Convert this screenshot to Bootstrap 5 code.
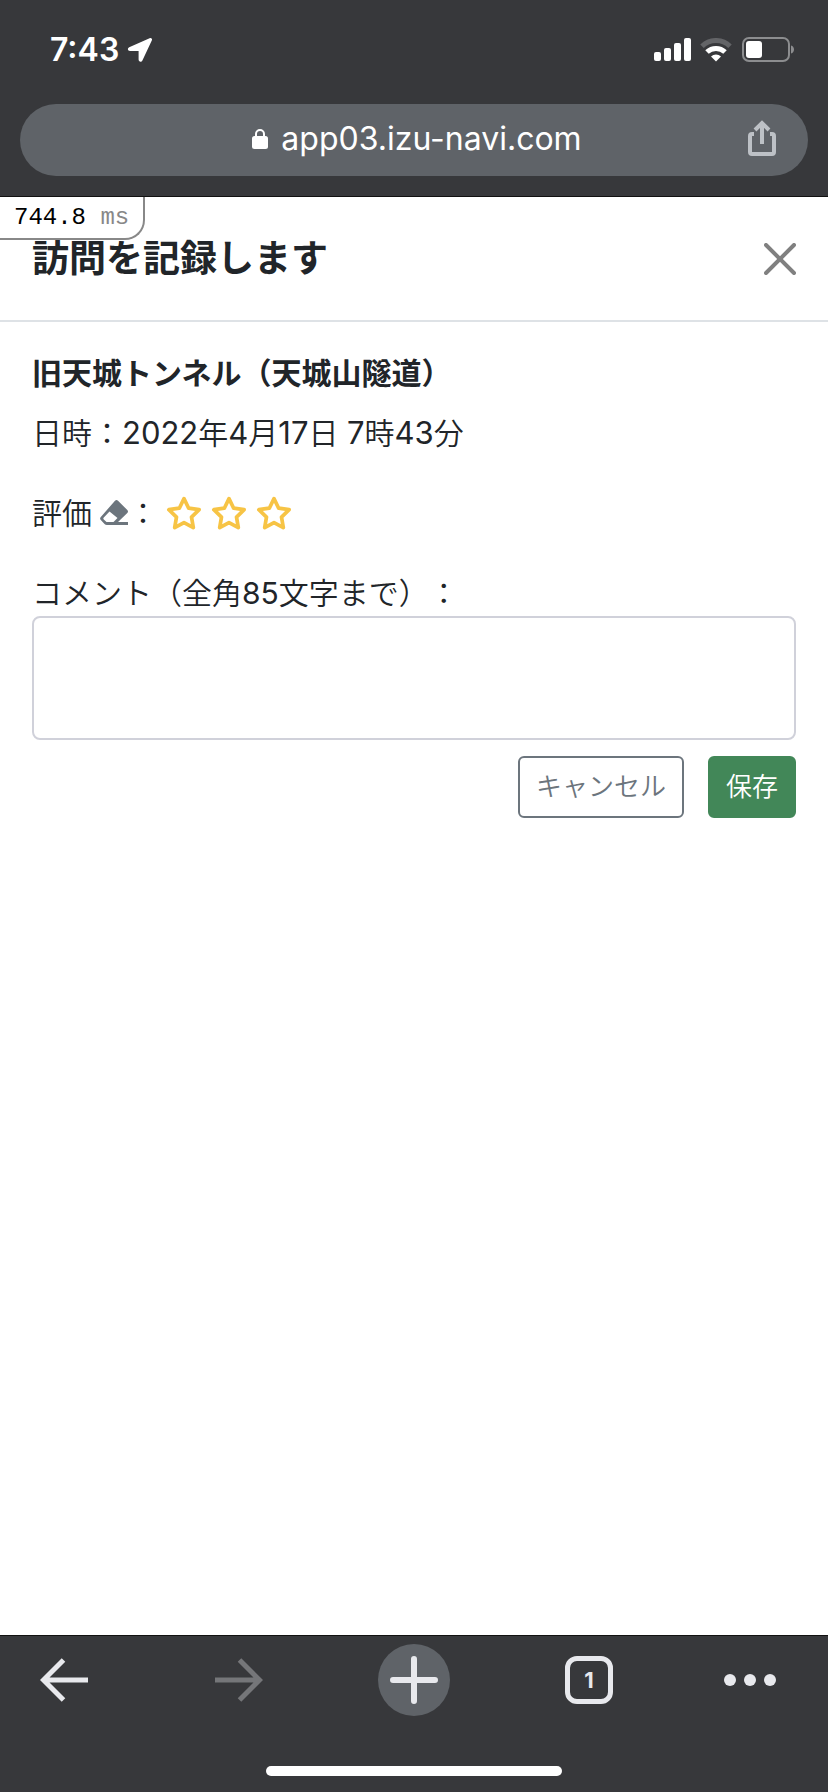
<!DOCTYPE html>
<html lang="ja">
<head>
<meta charset="utf-8">
<meta name="viewport" content="width=device-width, initial-scale=1">
<title>訪問を記録します</title>
<link href="https://cdn.jsdelivr.net/npm/bootstrap@5.3.0/dist/css/bootstrap.min.css" rel="stylesheet">
<style>
  body { font-family: Inter, "Noto Sans CJK JP", sans-serif; font-size: 30px; line-height: 44px; color: #212529; text-spacing-trim: space-all; }
  svg { display: block; flex: none; }
  .chrome { background: #37383b; color: #fff; }
  .chrome-top { border-bottom: 1px solid #111; }
  .chrome-bottom { border-top: 1px solid #111; }
  .status-bar { height: 104px; padding: 0 32px 4px 50px; }
  .clock { font-size: 32px; font-weight: 600; }
  .address { background: #5f6368; height: 72px; margin: 0 20px 20px; padding: 0 32px 2px; }
  .address a { color: #fff; font-size: 32px; gap: 13px; }
  .share-space { width: 34px; }
  .icon-btn { background: none; border: 0; padding: 0; color: #e8e9ed; }
  .timer { top: 0; left: 0; padding: 0 14px; font-family: "Liberation Mono", monospace; font-size: 24px; line-height: 41px; color: #000; background: #fff; border: solid #888; border-width: 0 2px 2px 0; border-bottom-right-radius: 20px; }
  .timer span { color: #888; }
  .panel-head { height: 125px; padding: 0 32px; border-bottom: 2px solid #dee2e6; }
  .panel-head h1 { font-size: 37px; line-height: 48px; }
  .panel-body { padding: 29px 32px; }
  .panel-body h2 { font-size: 30px; line-height: 44px; margin-bottom: 16px; }
  .light-text { font-family: Inter, "Noto Sans CJK JP DemiLight", "Noto Sans CJK JP Light", "Noto Sans CJK JP", sans-serif; }
  .num { font-size: 31px; }
  .gap-line { margin-bottom: 36px; }
  .comment-box { height: 124px; margin-top: 1px; border: 2px solid #d0d1da; border-radius: 8px; font-size: 30px; resize: none; }
  .action { font-size: 26px; line-height: 38px; padding: 10px 16px; border-width: 2px; border-radius: 6px; }
  .save { --bs-btn-bg: #428758; --bs-btn-border-color: #428758; }
  .stars { gap: 9px; color: #f7c445; margin-left: 8px; }
  .toolbar { padding: 8px 24px 0; }
  .toolbar .icon-btn { width: 80px; height: 72px; }
  .new-tab { width: 72px; height: 72px; background: #5f6368; }
  .tab-count { width: 48px; height: 48px; border: 5px solid #e8e9ed; border-radius: 12px; font-size: 22px; font-weight: 700; line-height: 38px; }
  .home { width: 296px; height: 10px; margin: 50px auto 16px; background: #fff; }
</style>
</head>
<body class="bg-white">
<div class="min-vh-100 d-flex flex-column">
  <header class="chrome chrome-top">
    <div class="status-bar d-flex align-items-center justify-content-between">
      <div class="d-flex align-items-center gap-2">
        <span class="clock">7:43</span>
        <svg width="26" height="26" viewBox="0 0 26 26" fill="#fff"><path d="M22.6 1.2 2.2 10.2C.3 11.1.5 13.9 3 13.9h8.600v8.700c0 2.500 2.900 2.800 3.800.8L24.900 3.300c.7-1.500-.8-2.800-2.300-2.100z"/></svg>
      </div>
      <div class="d-flex align-items-center gap-2">
        <svg width="38" height="24" viewBox="0 0 38 24" fill="#fff"><rect y="14" width="7" height="9" rx="2"/><rect x="10" y="10" width="7" height="13" rx="2"/><rect x="20" y="5" width="7" height="18" rx="2"/><rect x="30" width="7" height="23" rx="2"/></svg>
        <svg width="32" height="24" viewBox="0 0 32 24" fill="none"><path d="M2 8.200A20 20 0 0 1 30 8.200" stroke="#636467" stroke-width="5"/><path d="M7 14A13 13 0 0 1 25 14" stroke="#fff" stroke-width="5"/><path d="M11 18.500a7.500 7.500 0 0 1 10 0l-5 5z" fill="#fff"/></svg>
        <svg width="56" height="26" viewBox="0 0 56 26"><rect x="3" y="1" width="46" height="23" rx="6" fill="none" stroke="#8c8d8f" stroke-width="2"/><rect x="6" y="4" width="16" height="17" rx="3" fill="#fff"/><path d="M51 8.500c4 1 4 7 0 8z" fill="#8c8d8f"/></svg>
      </div>
    </div>
    <div class="address rounded-pill d-flex align-items-center justify-content-between">
      <span class="share-space"></span>
      <a href="#" class="d-flex align-items-center text-decoration-none">
        <svg width="16" height="20" viewBox="0 0 16 20"><rect y="7" width="16" height="13" rx="2.500" fill="#fff"/><path d="M4 8V5a4 4 0 0 1 8 0v3" fill="none" stroke="#fff" stroke-width="2"/></svg>
        <span>app03.izu-navi.com</span>
      </a>
      <button type="button" class="icon-btn" aria-label="共有">
        <svg width="28" height="38" viewBox="0 0 28 38" fill="none" stroke="#bdc1c6" stroke-width="4"><path d="M6 14H4q-2 0-2 2v16q0 2 2 2h20q2 0 2-2V16q0-2-2-2h-2M14 24V4M7 10l7-7 7 7"/></svg>
      </button>
    </div>
  </header>

  <main class="flex-grow-1 position-relative">
    <div class="panel-head d-flex align-items-center justify-content-between">
      <h1 class="fw-bold m-0">訪問を記録します</h1>
      <button type="button" class="icon-btn" aria-label="閉じる">
        <svg width="32" height="32" viewBox="0 0 32 32" stroke="#808080" stroke-width="4" stroke-linecap="round"><path d="M2 2l28 28M30 2 2 30"/></svg>
      </button>
    </div>
    <div class="timer position-absolute">744.8 <span>ms</span></div>
    <form class="panel-body">
      <h2 class="fw-bold">旧天城トンネル（天城山隧道）</h2>
      <div class="gap-line light-text">日時：<span class="num">2022</span>年<span class="num">4</span>月<span class="num">17</span>日 <span class="num">7</span>時<span class="num">43</span>分</div>
      <div class="gap-line light-text d-flex align-items-center">
        <span>評価</span>
        <button type="button" class="icon-btn ms-2" aria-label="評価を消す">
          <svg width="28" height="26" viewBox="0 0 28 26"><path fill="#6c757d" fill-rule="evenodd" d="M15 .7q1.500-1.400 3 0l9.300 9.300q1.400 1.500 0 3L18 22h10v3H7q-1.500 0-2.500-1L.8 20q-1.400-1.500 0-3zM9.500 11.500l-5.700 6q-1 1 0 2l2.700 2.500h7l4-4z"/></svg>
        </button>
        <span>：</span>
        <span class="stars d-flex">
          <button type="button" class="icon-btn" aria-label="星1"><svg width="36" height="35" viewBox="0 0 34 33" fill="none" stroke="#f7c445" stroke-width="3.500" stroke-linejoin="round"><path d="M17 2.500l4.400 9 9.900 1.400-7.200 7 1.700 9.900-8.800-4.700-8.800 4.700 1.700-9.900-7.200-7 9.900-1.400z"/></svg></button>
          <button type="button" class="icon-btn" aria-label="星2"><svg width="36" height="35" viewBox="0 0 34 33" fill="none" stroke="#f7c445" stroke-width="3.500" stroke-linejoin="round"><path d="M17 2.500l4.400 9 9.900 1.400-7.200 7 1.700 9.900-8.800-4.700-8.800 4.700 1.700-9.900-7.200-7 9.900-1.400z"/></svg></button>
          <button type="button" class="icon-btn" aria-label="星3"><svg width="36" height="35" viewBox="0 0 34 33" fill="none" stroke="#f7c445" stroke-width="3.500" stroke-linejoin="round"><path d="M17 2.500l4.400 9 9.900 1.400-7.200 7 1.700 9.900-8.800-4.700-8.800 4.700 1.700-9.900-7.200-7 9.900-1.400z"/></svg></button>
        </span>
      </div>
      <label for="comment" class="light-text d-block">コメント（全角85文字まで）：</label>
      <textarea id="comment" class="form-control comment-box"></textarea>
      <div class="light-text d-flex justify-content-end gap-4 mt-3">
        <button type="button" class="btn btn-outline-secondary action">キャンセル</button>
        <button type="button" class="btn btn-success action save">保存</button>
      </div>
    </form>
  </main>

  <footer class="chrome chrome-bottom">
    <nav class="toolbar d-flex justify-content-between">
      <button type="button" class="icon-btn d-flex align-items-center justify-content-center" aria-label="戻る"><svg width="48" height="44" viewBox="0 0 48 44" fill="none" stroke="#e8e9ed" stroke-width="5"><path d="M48 22H4M23.500 2 3.500 22l20 20"/></svg></button>
      <button type="button" class="icon-btn d-flex align-items-center justify-content-center" aria-label="進む"><svg width="48" height="44" viewBox="0 0 48 44" fill="none" stroke="#757679" stroke-width="5"><path d="M0 22h44M24.500 2l20 20-20 20"/></svg></button>
      <button type="button" class="icon-btn d-flex align-items-center justify-content-center" aria-label="新しいタブ"><span class="new-tab rounded-circle d-flex align-items-center justify-content-center"><svg width="48" height="48" viewBox="0 0 48 48" stroke="#e8e9ed" stroke-width="6" stroke-linecap="round"><path d="M3 24h42M24 3v42"/></svg></span></button>
      <button type="button" class="icon-btn d-flex align-items-center justify-content-center" aria-label="タブ一覧"><span class="tab-count text-center">1</span></button>
      <button type="button" class="icon-btn d-flex align-items-center" aria-label="メニュー"><svg width="52" height="12" viewBox="0 0 52 12" fill="#e8e9ed"><circle cx="6" cy="6" r="6"/><circle cx="26" cy="6" r="6"/><circle cx="46" cy="6" r="6"/></svg></button>
    </nav>
    <div class="home rounded-pill"></div>
  </footer>
</div>
<script src="https://cdn.jsdelivr.net/npm/bootstrap@5.3.0/dist/js/bootstrap.bundle.min.js"></script>
</body>
</html>
